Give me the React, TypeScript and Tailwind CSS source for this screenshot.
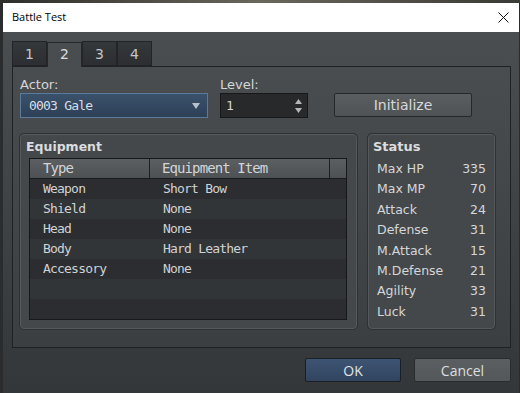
import React from "react";

const sans = { fontFamily: '"DejaVu Sans", sans-serif' };
const mono = { fontFamily: '"DejaVu Sans Mono", monospace' };

const equipment: [string, string][] = [
  ["Weapon", "Short Bow"],
  ["Shield", "None"],
  ["Head", "None"],
  ["Body", "Hard Leather"],
  ["Accessory", "None"],
  ["", ""],
  ["", ""],
];

const stats: [string, string][] = [
  ["Max HP", "335"],
  ["Max MP", "70"],
  ["Attack", "24"],
  ["Defense", "31"],
  ["M.Attack", "15"],
  ["M.Defense", "21"],
  ["Agility", "33"],
  ["Luck", "31"],
];

export default function App() {
  return (
    <div className="w-[520px] h-[393px] bg-[#2a2c2e] flex flex-col overflow-hidden">
      <div className="h-[3px] shrink-0 bg-gradient-to-r from-[#2e2e2b] via-[#6a675c] to-[#3a3a36]" />
      <div className="ml-[3px] w-[516px] flex-1 flex flex-col">
        {/* title bar */}
        <div className="h-[29px] shrink-0 bg-white flex items-center justify-between pl-[9px] pr-[10px]">
          <span className="text-[11px] text-black" style={{ fontFamily: '"Open Sans", sans-serif' }}>
            Battle Test
          </span>
          <svg width="11" height="11" viewBox="0 0 11 11" className="mt-[-1px]">
            <path d="M0.5 0.5 L10.5 10.5 M10.5 0.5 L0.5 10.5" stroke="#111" strokeWidth="1" fill="none" />
          </svg>
        </div>
        {/* body */}
        <div className="flex-1 bg-gradient-to-b from-[#4b4e51] to-[#34373a] pt-[9px] pl-[9px] flex flex-col">
          {/* tabs */}
          <div className="flex h-[25px] items-end">
            {["1", "2", "3", "4"].map((t) =>
              t === "2" ? (
                <div
                  key={t}
                  className="w-[35px] h-[25px] border border-b-0 border-[#25272a] bg-[#4a4d50] relative z-10 -mb-px flex items-center justify-center text-[14px] text-[#dcdcdc] pb-[1px]"
                  style={sans}
                >
                  {t}
                </div>
              ) : (
                <div
                  key={t}
                  className="w-[35px] h-[25px] border border-[#222427] bg-gradient-to-b from-[#35383b] to-[#2c2e31] flex items-center justify-center text-[14px] text-[#c4c6c8] pt-[1px]"
                  style={sans}
                >
                  {t}
                </div>
              )
            )}
          </div>
          {/* tab panel */}
          <div className="w-[499px] h-[282px] border border-[#1f2123] bg-gradient-to-b from-[#4a4d50] to-[#3c3f42] pl-[7px] pt-[10px] flex flex-col">
            <div className="flex items-end" style={sans}>
              <div className="flex flex-col">
                <div className="h-[15px] leading-[15px] text-[13px] text-[#d4d6d8]">Actor:</div>
                <div className="mt-[1px] w-[188px] h-[25px] border border-[#5a7b9c] bg-gradient-to-b from-[#3b516b] to-[#2d4057] flex items-center pl-[8px] pr-[7px] justify-between">
                  <span className="text-[13px] tracking-[-0.8px] text-[#d8dee4]" style={mono}>
                    0003 Gale
                  </span>
                  <svg width="8" height="6" viewBox="0 0 8 6">
                    <path d="M0 0 H8 L4 6 Z" fill="#b9c2cb" />
                  </svg>
                </div>
              </div>
              <div className="flex flex-col ml-[12px]">
                <div className="h-[15px] leading-[15px] text-[13px] text-[#d4d6d8]">Level:</div>
                <div className="mt-[1px] w-[88px] h-[25px] border border-[#17181a] bg-[#27292b] flex items-center pl-[5px] pr-[5px] justify-between">
                  <span className="text-[13px] text-[#d8d8d8]" style={mono}>
                    1
                  </span>
                  <svg width="7" height="16" viewBox="0 0 7 16">
                    <path d="M3.5 1 L7 6 H0 Z" fill="#b4b6b8" />
                    <path d="M0 10 H7 L3.5 15 Z" fill="#b4b6b8" />
                  </svg>
                </div>
              </div>
              <div className="ml-[26px] mb-[1px] w-[138px] h-[24px] border border-[#25272a] rounded-[2px] bg-gradient-to-b from-[#5b5e61] to-[#505356] flex items-center justify-center text-[14px] text-[#d6d8da]">
                Initialize
              </div>
            </div>
            <div className="flex mt-[16px]">
              {/* Equipment group */}
              <div className="w-[337px] h-[195px] rounded-[4px] border border-[#56595c] bg-[#45484b] shadow-[0_0_0_1px_#2f3134] pl-[8px] pt-[4px] flex flex-col">
                <div className="h-[16px] leading-[16px] text-[12.5px] font-bold text-[#dadcde] -ml-[3px]" style={sans}>
                  Equipment
                </div>
                <div className="mt-[3px] w-[318px] border border-[#17181a] bg-[#2a2c2f] flex flex-col" style={mono}>
                  <div className="h-[20px] flex border-b border-[#1a1b1d] bg-gradient-to-b from-[#5c5f62] to-[#4e5154] text-[14px] tracking-[-0.9px] text-[#d2d4d6]">
                    <div className="w-[120px] border-r border-[#1e1f21] pl-[13px] leading-[19px]">Type</div>
                    <div className="w-[180px] border-r border-[#1e1f21] pl-[12px] leading-[19px]">Equipment Item</div>
                    <div className="flex-1" />
                  </div>
                  {equipment.map(([a, b], i) => (
                    <div
                      key={i}
                      className={`h-[20px] flex text-[13px] tracking-[-0.8px] text-[#d0d2d4] leading-[20px] ${
                        i % 2 === 0 ? "bg-[#2b2d30]" : "bg-[#323538]"
                      }`}
                    >
                      <div className="w-[120px] pl-[13px]">{a}</div>
                      <div className="flex-1 pl-[13px]">{b}</div>
                    </div>
                  ))}
                </div>
              </div>
              {/* Status group */}
              <div
                className="ml-[11px] w-[127px] h-[195px] rounded-[4px] border border-[#56595c] bg-[#45484b] shadow-[0_0_0_1px_#2f3134] pt-[4px] flex flex-col"
                style={sans}
              >
                <div className="h-[16px] leading-[16px] text-[13px] font-bold text-[#dadcde] pl-[4px]">Status</div>
                <div className="mt-[4px] flex flex-col pl-[8px] pr-[8px]">
                  {stats.map(([k, v]) => (
                    <div key={k} className="h-[20.4px] leading-[20.4px] flex justify-between text-[12.5px] text-[#d4d6d8]">
                      <span>{k}</span>
                      <span>{v}</span>
                    </div>
                  ))}
                </div>
              </div>
            </div>
          </div>
          {/* buttons */}
          <div
            className="w-[499px] flex justify-end gap-[13px] mt-[10px] text-[14px]"
            style={{ fontFamily: '"Open Sans", sans-serif' }}
          >
            <div className="w-[96px] h-[24px] border border-[#1b1e22] rounded-[2px] bg-gradient-to-b from-[#3d5473] to-[#31455f] flex items-center justify-center text-[#e2e4e6]">
              OK
            </div>
            <div className="w-[97px] h-[24px] border border-[#2a2c2e] rounded-[2px] bg-gradient-to-b from-[#5c5f62] to-[#54575a] flex items-center justify-center text-[#dcdedf]">
              Cancel
            </div>
          </div>
        </div>
      </div>
    </div>
  );
}
